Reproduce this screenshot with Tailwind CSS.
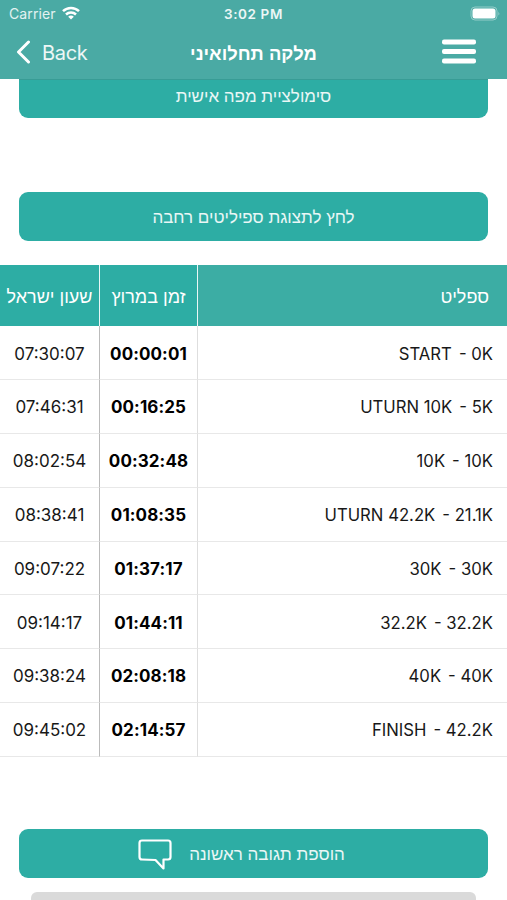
<!DOCTYPE html>
<html lang="he">
  <head>
    <meta charset="UTF-8" />
    <meta name="viewport" content="width=device-width, initial-scale=1.0" />
    <title>מלקה תחלואיני</title>
    <script src="https://cdn.jsdelivr.net/npm/@tailwindcss/browser@4"></script>
  </head>
  <body
    class="bg-white text-[#181818] h-[900px] overflow-hidden font-['Inter','Liberation_Sans',sans-serif]"
  >
    <!-- Status bar and navigation -->
    <header class="h-[79px] bg-[#4aaaa4] text-white">
      <div class="grid grid-cols-3 items-center h-[27px] px-[9px] text-[14px]">
        <div class="flex items-center gap-[6px] text-white/85">
          <span class="tracking-[0.1px]">Carrier</span>
          <svg class="w-[18px] h-[14px] -mt-px" viewBox="0 0 18 14" fill="none" stroke="white" stroke-width="2.5">
            <path d="M1 5.2C5.5 .8 12.5 .8 17 5.2" />
            <path d="M4 8.5C6.8 5.8 11.2 5.8 14 8.5" />
            <path d="M6.2 10.7C7.8 9.2 10.2 9.2 11.8 10.7L9 13.5Z" fill="white" stroke="none" />
          </svg>
        </div>
        <span class="text-center font-semibold text-[13.5px] tracking-[0.6px] pt-px text-white/90">3:02 PM</span>
        <svg class="justify-self-end w-[30px] h-[15px] -mr-[2px]" viewBox="0 0 30 15">
          <rect x="1" y="1" width="26" height="13" rx="4" fill="none" stroke="white" stroke-opacity=".4" />
          <rect x="2.5" y="2.5" width="23" height="10" rx="2.5" fill="white" />
          <path d="M28.5 5.5Q30 7.5 28.5 9.5Z" fill="white" fill-opacity=".5" />
        </svg>
      </div>
      <div class="grid grid-cols-[127px_253px_127px] items-center h-[50px]">
        <div class="flex items-center gap-[11px] pl-[16px] text-[20px] text-white/90">
          <svg class="w-[15px] h-[24px]" viewBox="0 0 15 24" fill="none" stroke="white" stroke-width="3" stroke-linecap="round" stroke-linejoin="round">
            <path d="M12.5 2L2.5 12L12.5 22" />
          </svg>
          <span class="tracking-[-0.3px] pt-px">Back</span>
        </div>
        <h1 dir="rtl" class="text-center font-bold text-[18.4px] pt-[3px] font-['Liberation_Sans',sans-serif]">מלקה תחלואיני</h1>
        <svg class="justify-self-end mr-[31px] w-[34px] h-[26px]" viewBox="0 0 34 26" fill="white">
          <rect y="0.5" width="34" height="5" rx="2" />
          <rect y="10" width="34" height="5" rx="2" />
          <rect y="19.5" width="34" height="5" rx="2" />
        </svg>
      </div>
    </header>

    <main>
      <button
        dir="rtl"
        class="block mx-[19px] w-[469px] h-[39px] pb-[5px] rounded-b-[9px] border-t border-[#389c95] bg-[#2dada4] text-white/90 text-[17px] font-['Liberation_Sans',sans-serif]"
      >
        סימולציית מפה אישית
      </button>
      <button
        dir="rtl"
        class="block mx-[19px] mt-[74px] w-[469px] h-[49px] pt-[2px] rounded-[9px] bg-[#2dada4] text-white/90 text-[17px] font-['Liberation_Sans',sans-serif]"
      >
        לחץ לתצוגת ספיליטים רחבה
      </button>

      <!-- Splits -->
      <table dir="rtl" class="mt-[24px] w-full table-fixed border-separate border-spacing-0 text-[17px]">
        <colgroup>
          <col class="w-[309px]" />
          <col class="w-[99px]" />
          <col class="w-[99px]" />
        </colgroup>
        <thead class="bg-[#2dada4] text-white text-[18px] font-['Liberation_Sans',sans-serif]">
          <tr class="h-[61.4px]">
            <th class="font-normal text-right p-0 pt-[3px] pr-[18px] bg-[#3cada4]">ספליט</th>
            <th class="font-normal border-x border-white/90 p-0 pt-[3px]">זמן במרוץ</th>
            <th class="font-normal p-0 pt-[3px] whitespace-nowrap">שעון ישראל</th>
          </tr>
        </thead>
        <tbody id="splits"></tbody>
      </table>

      <button
        dir="rtl"
        class="flex items-center justify-center gap-[17px] mx-[19px] mt-[72px] w-[469px] h-[49px] pr-[24px] rounded-[9px] bg-[#2dada4] text-white/90 text-[17px] font-['Liberation_Sans',sans-serif]"
      >
        <span class="pt-[3px]">הוספת תגובה ראשונה</span>
        <svg class="w-[34px] h-[31px] mt-[2px]" viewBox="0 0 34 31" fill="none" stroke="white" stroke-width="2.2" stroke-linejoin="round">
          <path d="M4 1.5H30Q32.5 1.5 32.5 4V18Q32.5 20.5 30 20.5H25.5V29.5L17.5 21L4 20.5Q1.5 20.5 1.5 18V4Q1.5 1.5 4 1.5Z" />
        </svg>
      </button>
      <div class="ml-[31px] mt-[14px] w-[445px] h-[20px] rounded-t-[6px] bg-[#dadada]"></div>
    </main>

    <script>
      const splits = [
        ["START", "0K", "00:00:01", "07:30:07"],
        ["UTURN 10K", "5K", "00:16:25", "07:46:31"],
        ["10K", "10K", "00:32:48", "08:02:54"],
        ["UTURN 42.2K", "21.1K", "01:08:35", "08:38:41"],
        ["30K", "30K", "01:37:17", "09:07:22"],
        ["32.2K", "32.2K", "01:44:11", "09:14:17"],
        ["40K", "40K", "02:08:18", "09:38:24"],
        ["FINISH", "42.2K", "02:14:57", "09:45:02"],
      ];

      document.getElementById("splits").innerHTML = splits
        .map(
          ([name, distance, raceTime, clock]) => `
          <tr class="h-[53.8px]">
            <td class="border-b border-[#e8e8e8] p-0 pt-[3px] pr-[14px] text-right"><span dir="ltr" class="inline-flex gap-[7px] text-[16.7px]"><span>${name}</span><span>- ${distance}</span></span></td>
            <td class="border-b border-x border-b-[#e8e8e8] border-r-[#dedede] border-l-[#bbbbbb] p-0 pt-[3px] text-center font-bold text-black tracking-[0.1px]">${raceTime}</td>
            <td class="border-b border-[#e8e8e8] p-0 pt-[3px] text-center">${clock}</td>
          </tr>`
        )
        .join("");
    </script>
  </body>
</html>
